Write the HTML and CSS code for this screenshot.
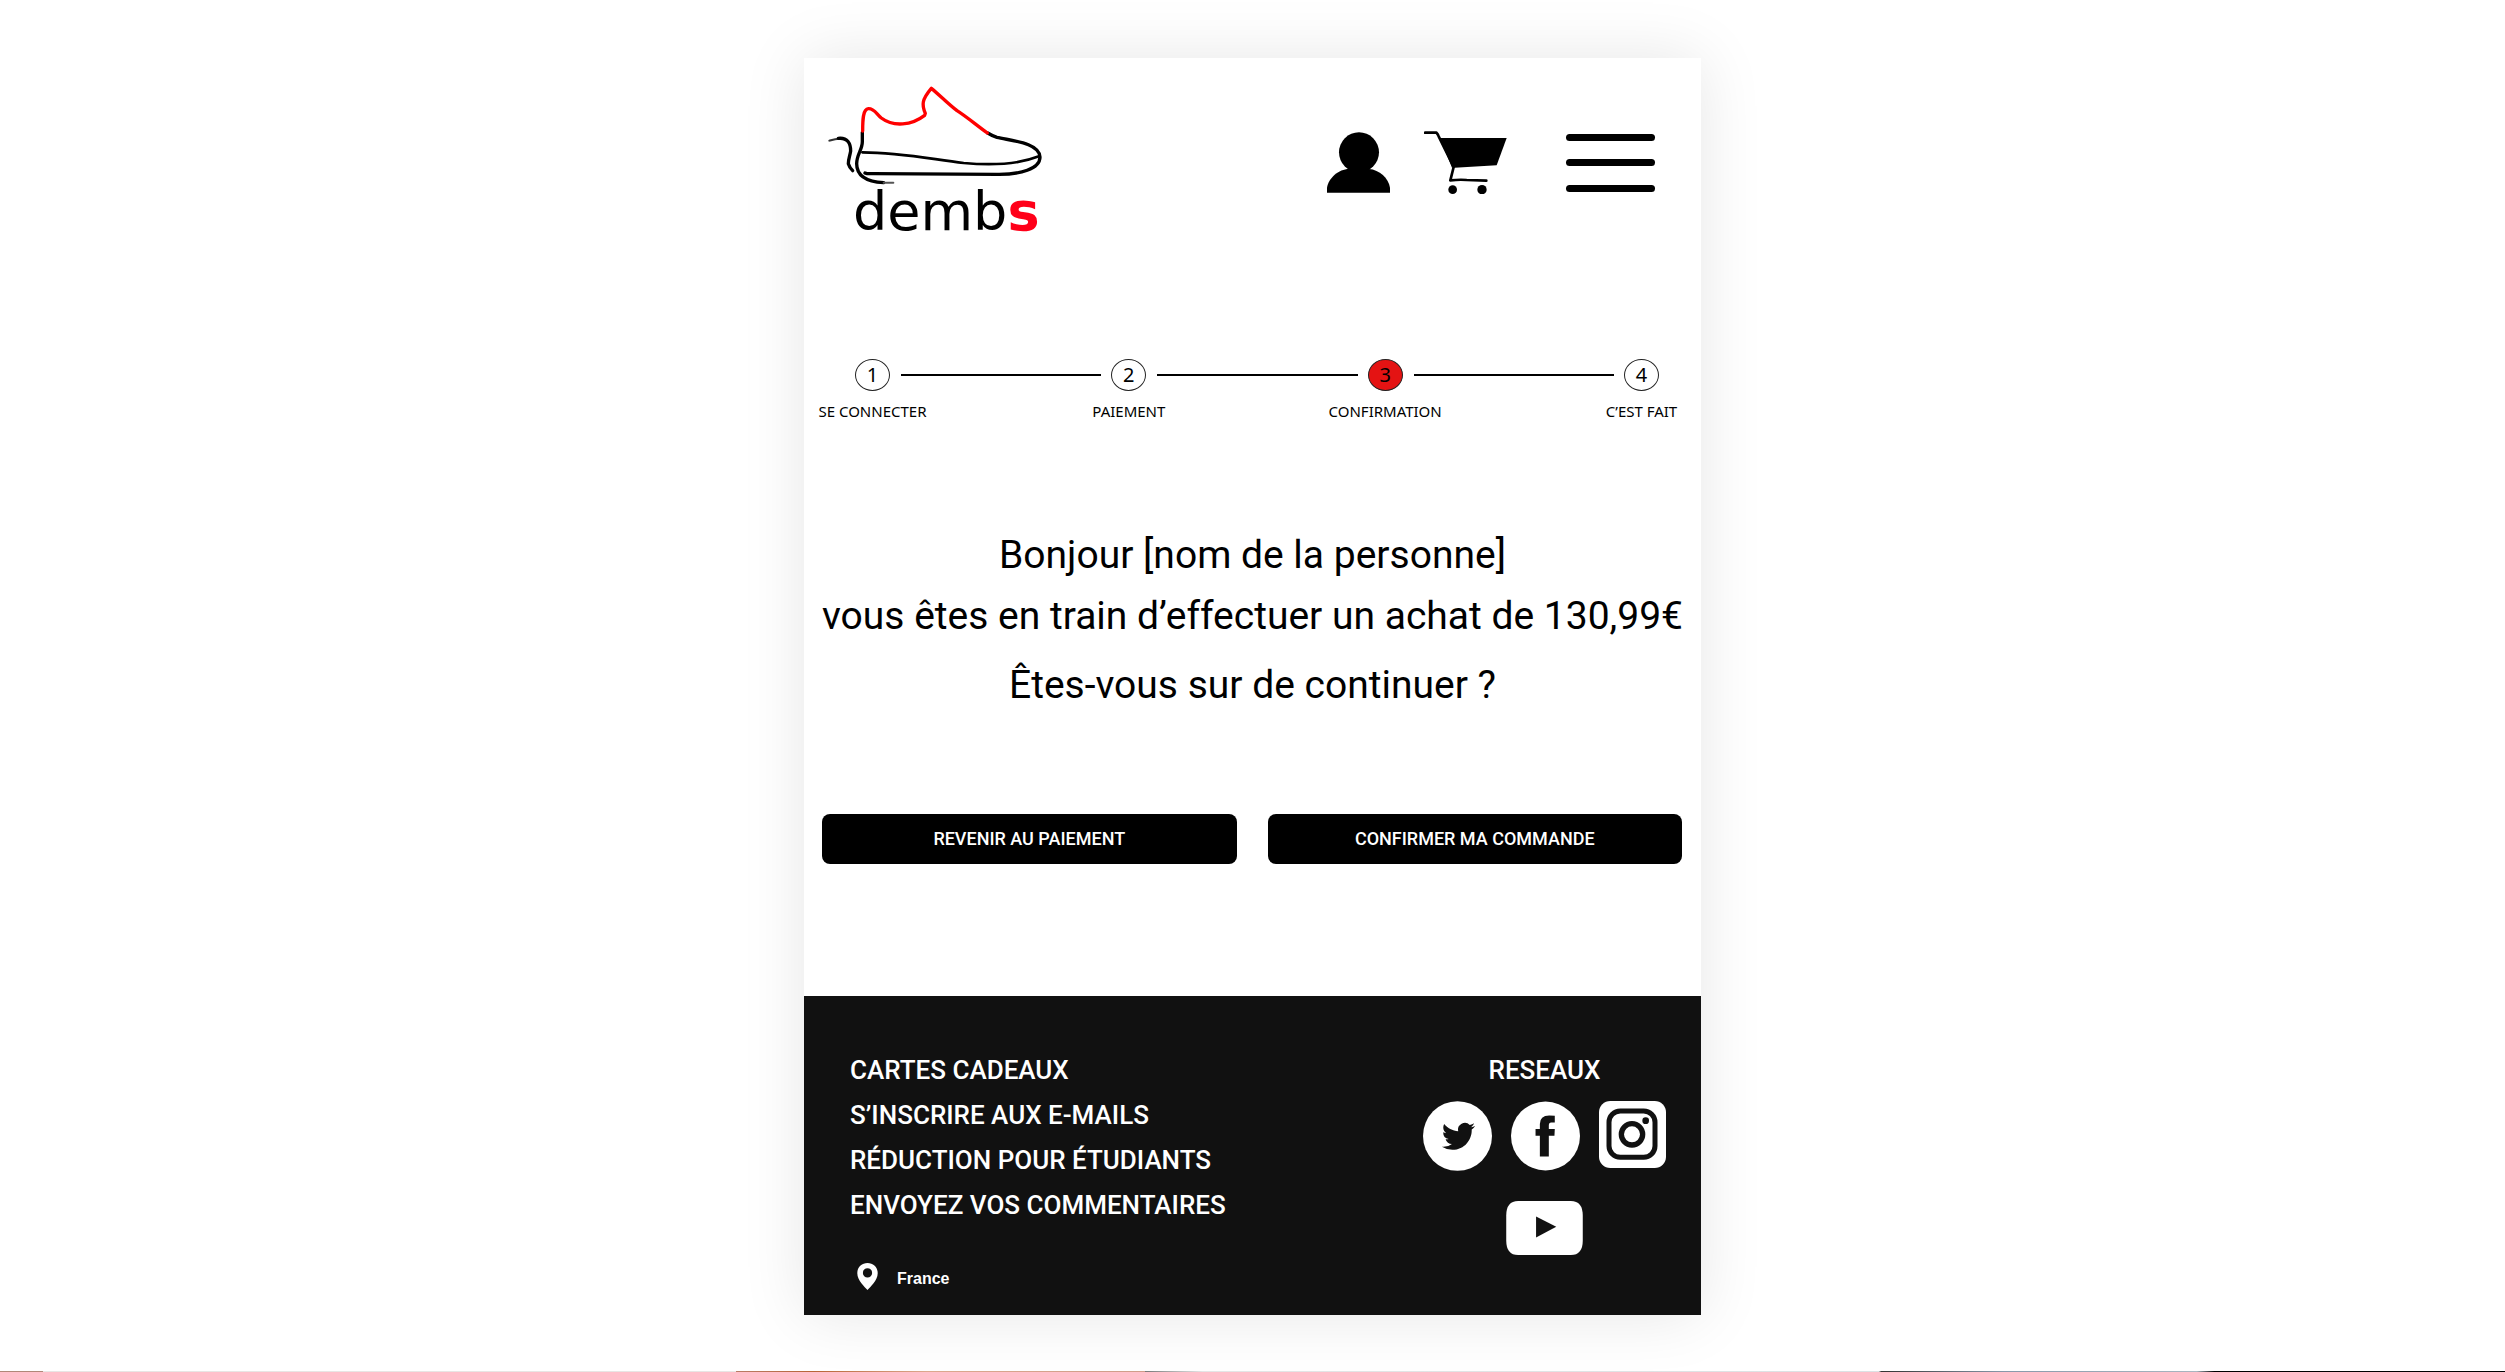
FILE: index.html
```html
<!DOCTYPE html>
<html lang="fr">
<head>
<meta charset="utf-8">
<meta name="viewport" content="width=device-width, initial-scale=1">
<title>dembs – Confirmation</title>
<link rel="stylesheet" href="styles.css">
</head>
<body>
<main class="card">
  <header class="header">
    <a class="logo" href="#">
      <svg class="logo-shoe" viewBox="140 130 669 309" fill="none" stroke="#000" stroke-width="10" stroke-linecap="round" stroke-linejoin="round" aria-hidden="true">
        <path d="M246 278V306C246 330 229 344 229 372C229 408 260 426 310 429"/>
        <path d="M310 429H339" stroke="#555" stroke-width="6"/>
        <path d="M147 303C160 299 166 297 176 297" stroke="#333" stroke-width="6"/>
        <path d="M174 296C202 293 211 312 211 334C208 352 204 358 204 372C207 382 211 387 217 393"/>
        <path d="M246 338C360 338 450 358 550 370C650 379 720 372 776 350" stroke-width="8"/>
        <path d="M254 400C260 403 270 402 280 402L650 404C720 405 779 388 779 352C777 308 690 303 650 293C640 290 630 285 622 280"/>
        <path d="M247 274C247 244 247 208 264 207C282 206 288 223 303 235C340 263 394 257 433 227L435 221C424 196 424 180 453 146C480 168 500 190 530 213C560 232 590 258 621 280" stroke="#f00"/>
      </svg>
      <span class="logo-name">demb<b>s</b></span>
    </a>
    <nav class="tools" aria-label="Menu principal">
      <a href="#" aria-label="Mon compte">
        <svg class="icon-user" viewBox="81 98 189 181" aria-hidden="true"><circle cx="177" cy="158" r="60"/><path d="M81 279V264C85 236 116 208 147 208H207C238 210 266 236 270 264V279Z"/></svg>
      </a>
      <a href="#" aria-label="Panier">
        <svg class="icon-cart" viewBox="372 90 249 189" aria-hidden="true">
          <path d="M420 111H620L590 193L464 200H456Z"/>
          <path d="M375 95H409Q413 98 416 106L461 198L451 238Q480 235 500 237L559 239" fill="none" stroke="#000" stroke-width="8" stroke-linecap="round" stroke-linejoin="round"/>
          <circle cx="458" cy="266" r="13"/><circle cx="546" cy="266" r="14"/>
        </svg>
      </a>
      <button class="burger" type="button" aria-label="Ouvrir le menu"><span></span><span></span><span></span></button>
    </nav>
  </header>

  <ol class="steps">
    <li class="step"><span class="step-num">1</span><span class="step-label">SE CONNECTER</span></li>
    <li class="step"><span class="step-num">2</span><span class="step-label">PAIEMENT</span></li>
    <li class="step step-current" aria-current="step"><span class="step-num">3</span><span class="step-label">CONFIRMATION</span></li>
    <li class="step"><span class="step-num">4</span><span class="step-label">C’EST FAIT</span></li>
  </ol>

  <section class="message">
    <p>Bonjour [nom de la personne]</p>
    <p>vous êtes en train d’effectuer un achat de 130,99€</p>
    <p class="question">Êtes-vous sur de continuer ?</p>
  </section>

  <div class="actions">
    <button class="btn" type="button">REVENIR AU PAIEMENT</button>
    <button class="btn" type="button">CONFIRMER MA COMMANDE</button>
  </div>

  <footer class="footer">
    <div class="footer-main">
      <ul class="links">
        <li><a href="#">CARTES CADEAUX</a></li>
        <li><a href="#">S’INSCRIRE AUX E-MAILS</a></li>
        <li><a href="#">RÉDUCTION POUR ÉTUDIANTS</a></li>
        <li><a href="#">ENVOYEZ VOS COMMENTAIRES</a></li>
      </ul>
      <p class="country">
        <svg class="pin" viewBox="231 845 62 82" aria-hidden="true"><path fill="#fff" fill-rule="evenodd" d="M262 845C244 845 231 858 231 876C231 898 254 918 262 927C270 918 293 898 293 876C293 858 280 845 262 845ZM262 861A14 14 0 1 1 262 889A14 14 0 1 1 262 861Z"/></svg>
        France
      </p>
    </div>
    <div class="social">
      <h2>RESEAUX</h2>
      <div class="social-row">
        <a href="#" aria-label="Twitter">
          <svg class="round" viewBox="98 208 208 210" aria-hidden="true"><ellipse cx="202" cy="313" rx="104" ry="105" fill="#fff"/><path fill="#111" transform="translate(155 264) scale(4.17)" d="M23.953 4.57a10 10 0 01-2.825.775 4.958 4.958 0 002.163-2.723c-.951.555-2.005.959-3.127 1.184a4.92 4.92 0 00-8.384 4.482C7.69 8.095 4.067 6.13 1.64 3.162a4.822 4.822 0 00-.666 2.475c0 1.71.87 3.213 2.188 4.096a4.904 4.904 0 01-2.228-.616v.06a4.923 4.923 0 003.946 4.827 4.996 4.996 0 01-2.212.085 4.936 4.936 0 004.604 3.417 9.867 9.867 0 01-6.102 2.105c-.39 0-.779-.023-1.17-.067a13.995 13.995 0 007.557 2.209c9.053 0 13.998-7.496 13.998-13.985 0-.21 0-.42-.015-.63A9.935 9.935 0 0024 4.59z"/></svg>
        </a>
        <a href="#" aria-label="Facebook">
          <svg class="round" viewBox="359 207 208 210" aria-hidden="true"><circle cx="463" cy="312" r="104" fill="#fff"/><path fill="#111" d="M491 251V271H480Q473 271 473 280V291H491L490 311H473V374H446V311H433V291H446V276Q446 250 474 250Z"/></svg>
        </a>
        <a href="#" aria-label="Instagram">
          <svg class="square" viewBox="627 209 201 201" aria-hidden="true"><rect x="627" y="209" width="201" height="201" rx="34" fill="#fff"/><rect x="657" y="239" width="138" height="139" rx="34" fill="none" stroke="#111" stroke-width="15"/><circle cx="726" cy="309" r="32" fill="none" stroke="#111" stroke-width="16"/><circle cx="767" cy="268" r="10" fill="#111"/></svg>
        </a>
      </div>
      <a href="#" aria-label="YouTube">
        <svg class="video" viewBox="354 508 231 163" aria-hidden="true"><path fill="#fff" d="M390 508H549Q585 508 585 552V627Q585 671 549 671H390Q354 671 354 627V552Q354 508 390 508Z"/><path fill="#111" d="M444 555L505 586L444 618Z"/></svg>
      </a>
    </div>
  </footer>
</main>
<div class="strip"></div>
</body>
</html>
```

FILE: styles.css
```css
* { box-sizing: border-box; }

body {
  margin: 0;
  min-height: 100vh;
  display: flex;
  flex-direction: column;
  justify-content: space-between;
  background: #fff;
  color: #000;
  font-family: Roboto, "Liberation Sans", sans-serif;
}

a { color: inherit; text-decoration: none; }
svg { display: block; }
p, h2 { margin: 0; }
ul, ol { margin: 0; padding: 0; list-style: none; }

.card {
  width: 100%;
  max-width: 897px;
  margin: 58px auto 56px;
  background: #fff;
  box-shadow: 0 0 60px rgba(0, 0, 0, 0.1);
}

/* Header */
.header {
  display: flex;
  justify-content: space-between;
  align-items: flex-start;
  padding: 25px 46px 0 23px;
}

.logo-shoe { width: 223px; height: 103px; }

.logo-name {
  display: block;
  padding-left: 26px;
  font: 54px/52px "DejaVu Sans", sans-serif;
}

.logo-name b { color: #ff0019; }

.tools {
  display: flex;
  align-items: center;
  gap: 34px;
  padding-top: 48px;
}

.icon-user { width: 63px; height: 61px; }
.icon-cart { width: 83px; height: 63px; }

.burger {
  display: flex;
  flex-direction: column;
  justify-content: space-between;
  width: 89px;
  height: 58px;
  margin-left: 25px;
  padding: 0;
  border: 0;
  background: none;
}

.burger span { height: 7px; border-radius: 4px; background: #000; }

/* Progress */
.steps {
  display: flex;
  padding: 121px 42px 0 51px;
}

.step {
  display: grid;
  grid-template-columns: 35px 1fr;
  column-gap: 11px;
  row-gap: 10px;
  align-items: center;
  flex: 1;
}

.step:last-child { flex: none; grid-template-columns: 35px; }

.step:not(:last-child)::after {
  content: "";
  grid-area: 1 / 2;
  height: 2px;
  margin-right: 10px;
  background: #000;
}

.step-num {
  width: 35px;
  height: 32px;
  border: 1px solid #222;
  border-radius: 50%;
  font: 20px/30px "Noto Sans", sans-serif;
  text-align: center;
}

.step-current .step-num { background: #e41313; }

.step-label {
  grid-area: 2 / 1;
  justify-self: center;
  font: 15px/20px "Noto Sans", sans-serif;
  white-space: nowrap;
}

/* Message */
.message {
  padding-top: 104px;
  text-align: center;
  font-size: 39px;
  line-height: 61px;
}

.question { margin-top: 8px; }

.actions {
  display: grid;
  grid-template-columns: 1fr 1fr;
  gap: 31px;
  padding: 98px 19px 132px 18px;
}

.btn {
  height: 50px;
  border: 0;
  border-radius: 8px;
  background: #000;
  color: #fff;
  font: 500 18px/24px Roboto, sans-serif;
}

/* Footer */
.footer {
  display: flex;
  justify-content: space-between;
  padding: 52px 35px 20px 46px;
  background: #111;
  color: #fff;
}

.links { font-size: 26px; font-weight: 500; line-height: 45px; }

.country {
  display: flex;
  align-items: flex-start;
  gap: 19px;
  padding: 35px 0 0 7px;
  font: bold 16px/32px "Liberation Sans", sans-serif;
}

.pin { width: 21px; height: 27px; }

.social {
  display: flex;
  flex-direction: column;
  align-items: center;
}

.social h2 { font-size: 26px; font-weight: 500; line-height: 45px; }

.social-row { display: flex; gap: 19px; padding: 8px 0 30px; }

.round { width: 69px; height: 70px; }
.square { width: 67px; height: 67px; }
.video { width: 77px; height: 54px; }

/* Top edge of the photo band below the card */
.strip {
  height: 1px;
  background: linear-gradient(90deg, #b08878 0 1.7%, #e8e6e4 1.7% 29.4%, #b97c66 29.4%, #b86436 32.5%, #dca88e 37%, #cf9d8a 45.7%, #777 45.7%, #e4e6e6 48%, #dce2e4 75%, #333 75.1%, #8899aa 80%, #a9b6c0 87.7%, #000 88.4%);
}
```
